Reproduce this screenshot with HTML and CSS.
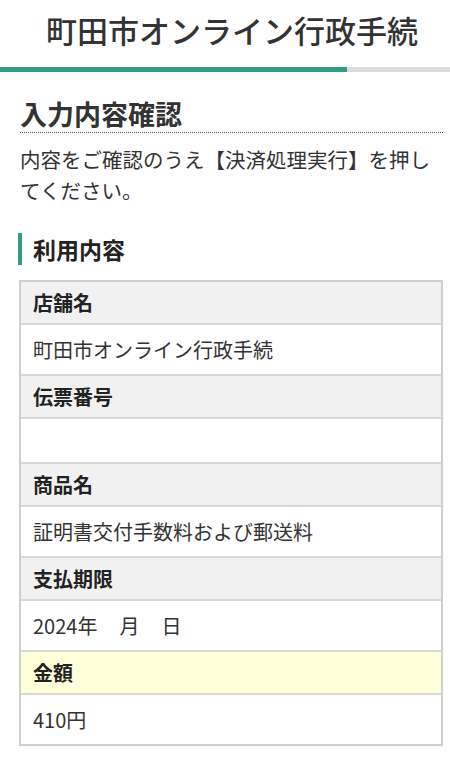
FILE: index.html
```html
<!DOCTYPE html>
<html lang="ja">
<head>
<meta charset="utf-8">
<title>入力内容確認</title>
<link rel="stylesheet" href="styles.css">
</head>
<body>
<header class="site-header">
  <h1 class="site-title">町田市オンライン行政手続</h1>
</header>
<div class="progress"><div class="progress-fill" style="width:77%"></div></div>
<main class="content">
  <h2 class="page-title">入力内容確認</h2>
  <p class="lead">内容をご確認のうえ【決済処理実行】を押してください。</p>
  <h3 class="section-title">利用内容</h3>
  <dl class="detail">
    <dt class="label">店舗名</dt>
    <dd class="value">町田市オンライン行政手続</dd>
    <dt class="label">伝票番号</dt>
    <dd class="value value-blank"></dd>
    <dt class="label">商品名</dt>
    <dd class="value">証明書交付手数料および郵送料</dd>
    <dt class="label">支払期限</dt>
    <dd class="value">2024年<span class="gap"></span>月<span class="gap"></span>日</dd>
    <dt class="label label-amount">金額</dt>
    <dd class="value">410円</dd>
  </dl>
</main>
</body>
</html>
```
FILE: styles.css
```css
html, body {
  margin: 0;
  padding: 0;
  background: #fff;
  color: #333;
  font-family: "Noto Sans CJK JP", "Noto Sans", sans-serif;
}

.site-header {
  height: 67px;
  display: flex;
  align-items: flex-start;
  justify-content: center;
  padding-left: 14px;
}

.site-title {
  margin: 8px 0 0;
  font-size: 31px;
  line-height: 44px;
  font-weight: 500;
  color: #333;
}

.progress {
  height: 5px;
  background: #dcdcdc;
}

.progress-fill {
  height: 100%;
  background: #2f9c85;
}

.content {
  padding: 0 7px 0 20px;
}

.page-title {
  margin: 24px 0 0;
  font-size: 27px;
  line-height: 36px;
  font-weight: 700;
  color: #333;
  padding-bottom: 0;
  border-bottom: 1px dotted #555;
}

.lead {
  margin: 11px 0 0;
  font-size: 20.5px;
  line-height: 31px;
  color: #333;
}

.section-title {
  margin: 27px 0 0 -2px;
  padding-left: 11px;
  border-left: 4px solid #2f9c85;
  font-size: 23px;
  line-height: 32px;
  font-weight: 700;
  color: #222;
}

.detail {
  margin: 15px 0 0 -1px;
  border: 2px solid #cfcfcf;
  display: flex;
  flex-direction: column;
}

.label,
.value {
  margin: 0;
  padding: 0 12px;
  font-size: 20px;
  display: flex;
  align-items: center;
}

.label {
  height: 41px;
  background: #f1f1f1;
  font-weight: 700;
  color: #222;
  border-bottom: 2px solid #d8d8d8;
}

.label-amount {
  background: #ffffd9;
}

.value {
  height: 49px;
  color: #333;
  border-bottom: 2px solid #d8d8d8;
}

.value:last-child {
  border-bottom: none;
}

.value-blank {
  height: 43px;
}

.gap {
  display: inline-block;
  width: 22px;
}
```
